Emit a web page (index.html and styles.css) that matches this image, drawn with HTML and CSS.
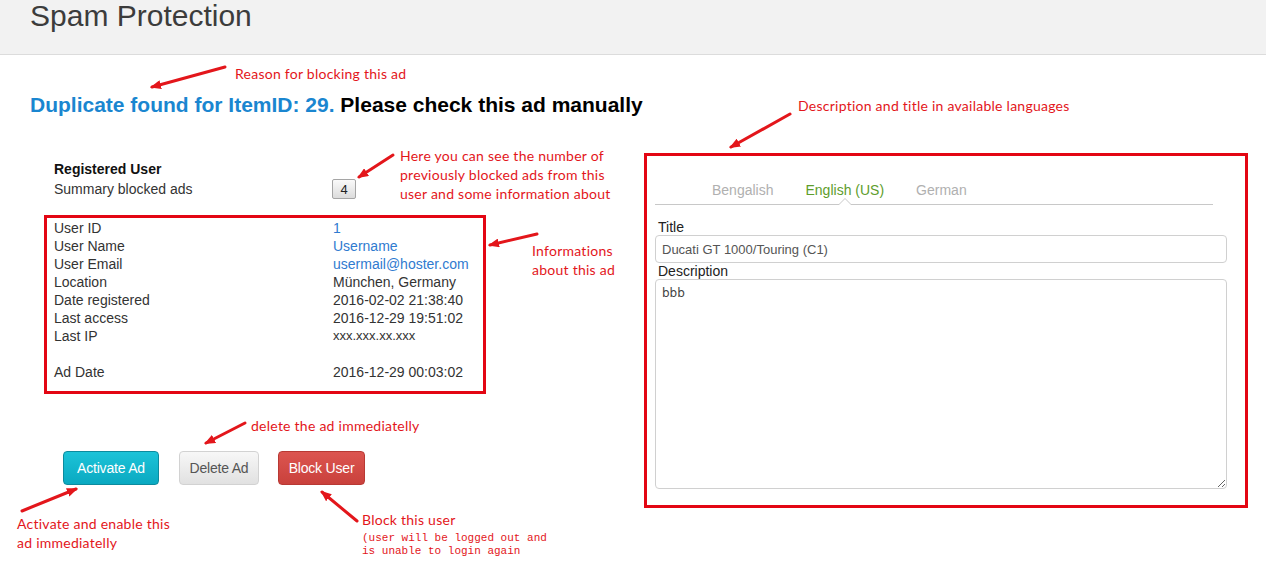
FILE: index.html
```html
<!DOCTYPE html>
<html lang="en">
<head>
<meta charset="utf-8">
<title>Spam Protection</title>
<link rel="stylesheet" href="styles.css">
</head>
<body>
<header class="page-header">
  <h1 class="page-title">Spam Protection</h1>
</header>

<main class="content">
  <h2 class="reason"><span class="reason-blue">Duplicate found for ItemID: 29.</span> Please check this ad manually</h2>

  <div class="columns">
    <section class="user-col">
      <div class="summary">
        <div class="summary-title">Registered User</div>
        <div class="summary-row">
          <span class="summary-label">Summary blocked ads</span>
          <button class="count-btn">4</button>
        </div>
      </div>

      <div class="info-box">
        <div class="info-grid">
          <span>User ID</span><a class="link">1</a>
          <span>User Name</span><a class="link">Username</a>
          <span>User Email</span><a class="link">usermail@hoster.com</a>
          <span>Location</span><span>München, Germany</span>
          <span>Date registered</span><span>2016-02-02 21:38:40</span>
          <span>Last access</span><span>2016-12-29 19:51:02</span>
          <span>Last IP</span><span class="ip">xxx.xxx.xx.xxx</span>
          <span class="blank">&nbsp;</span><span class="blank">&nbsp;</span>
          <span>Ad Date</span><span>2016-12-29 00:03:02</span>
        </div>
      </div>

      <div class="actions">
        <button class="btn btn-activate">Activate Ad</button>
        <button class="btn btn-delete">Delete Ad</button>
        <button class="btn btn-block">Block User</button>
      </div>
    </section>

    <section class="lang-panel">
      <ul class="tabs">
        <li class="tab">Bengalish</li>
        <li class="tab active">English (US)</li>
        <li class="tab">German</li>
      </ul>
      <label class="field-label">Title</label>
      <input class="field-input" type="text" value="Ducati GT 1000/Touring (C1)">
      <label class="field-label">Description</label>
      <textarea class="field-textarea">bbb</textarea>
    </section>
  </div>
</main>

<div class="note note-reason">Reason for blocking this ad</div>
<div class="note note-desc">Description and title in available languages</div>
<div class="note note-here">Here you can see the number of<br>previously blocked ads from this<br>user and some information about</div>
<div class="note note-info">Informations<br>about this ad</div>
<div class="note note-delete">delete the ad immediatelly</div>
<div class="note note-activate">Activate and enable this<br>ad immediatelly</div>
<div class="note note-block">Block this user</div>
<div class="note-mono">(user will be logged out and<br>is unable to login again</div>

<svg class="arrows" viewBox="0 0 1266 583" width="1266" height="583" aria-hidden="true">
  <defs>
    <marker id="ah" markerWidth="11" markerHeight="9" refX="9" refY="4.5" orient="auto" markerUnits="userSpaceOnUse">
      <path d="M0,0 L11,4.5 L0,9 z" fill="#e3161b"/>
    </marker>
  </defs>
  <g stroke="#e3161b" stroke-width="3" stroke-linecap="round" fill="none">
    <line x1="225" y1="67" x2="152" y2="87" marker-end="url(#ah)"/>
    <line x1="790" y1="114" x2="731" y2="147" marker-end="url(#ah)"/>
    <line x1="393" y1="155" x2="359" y2="177" marker-end="url(#ah)"/>
    <line x1="537" y1="234" x2="490" y2="245" marker-end="url(#ah)"/>
    <line x1="245" y1="423" x2="206" y2="443" marker-end="url(#ah)"/>
    <line x1="22" y1="511" x2="76" y2="489" marker-end="url(#ah)"/>
    <line x1="357" y1="521" x2="322" y2="492" marker-end="url(#ah)"/>
  </g>
</svg>
</body>
</html>
```

FILE: styles.css
```css
* { box-sizing: border-box; }

html, body {
  margin: 0;
  padding: 0;
  background: #ffffff;
}

body {
  position: relative;
  width: 1266px;
  min-height: 583px;
  overflow: hidden;
  font-family: "Liberation Sans", Arial, sans-serif;
  font-size: 14px;
  color: #333333;
}

.page-header {
  height: 55px;
  background: #f2f2f2;
  border-bottom: 1px solid #dcdcdc;
  padding-left: 30px;
}

.page-title {
  margin: 0;
  font-size: 30px;
  font-weight: normal;
  line-height: 32px;
  color: #3c3c3c;
}

.content {
  padding-left: 30px;
}

.reason {
  margin: 38px 0 0;
  font-size: 21px;
  line-height: 24px;
  font-weight: bold;
  color: #000000;
}

.reason-blue { color: #1a86d0; }

.columns {
  display: flex;
  align-items: flex-start;
  margin-top: 36px;
}

.user-col {
  width: 614px;
  padding-left: 14px;
  padding-top: 6px;
}

.summary {
  padding-left: 10px;
}

.summary-title {
  font-weight: bold;
  line-height: 20px;
  color: #111;
}

.summary-row {
  display: flex;
  align-items: center;
  height: 20px;
}

.summary-label {
  width: 278px;
  line-height: 20px;
}

.count-btn {
  width: 24px;
  height: 20px;
  padding: 0;
  margin: 0;
  font-family: "Liberation Sans", Arial, sans-serif;
  font-size: 13px;
  color: #222;
  background: linear-gradient(#fafafa, #dcdcdc);
  border: 1px solid #a5a5a5;
  border-radius: 2px;
}

.info-box {
  margin-top: 16px;
  width: 442px;
  border: 3px solid #e30613;
  padding: 1px 0 10px 7px;
}

.info-grid {
  display: grid;
  grid-template-columns: 279px auto;
  line-height: 18px;
}

.link { color: #2f7bd0; text-decoration: none; }
.ip { font-size: 13px; }

.actions {
  display: flex;
  gap: 19px;
  margin-top: 57px;
  padding-left: 19px;
}

.btn {
  height: 34px;
  padding: 0;
  font-family: "Liberation Sans", Arial, sans-serif;
  font-size: 14px;
  letter-spacing: -0.2px;
  border-radius: 4px;
  border: 1px solid;
}

.btn-activate {
  width: 96px;
  margin-right: 1px;
  color: #ffffff;
  background: linear-gradient(#1cc3d8, #0aa9c1);
  border-color: #0c8b9e;
}

.btn-delete {
  width: 80px;
  color: #555555;
  background: linear-gradient(#f7f7f7, #e1e1e1);
  border-color: #d2d2d2;
}

.btn-block {
  width: 87px;
  color: #ffffff;
  background: linear-gradient(#dc5550, #c9413c);
  border-color: #b83934;
}

.lang-panel {
  width: 604px;
  border: 3px solid #e30613;
  padding: 20px 18px 16px 8px;
  display: flex;
  flex-direction: column;
}

.tabs {
  list-style: none;
  margin: 0 14px 0 0;
  padding: 0 0 0 41px;
  display: flex;
  border-bottom: 1px solid #c8c8c8;
}

.tab {
  position: relative;
  padding: 4px 16px;
  line-height: 20px;
  color: #b0b0b0;
}

.tab.active { color: #5e9d2c; }

.tab.active::before {
  content: "";
  position: absolute;
  left: 50%;
  bottom: -1px;
  margin-left: -7px;
  border-left: 7px solid transparent;
  border-right: 7px solid transparent;
  border-bottom: 7px solid #c8c8c8;
}

.tab.active::after {
  content: "";
  position: absolute;
  left: 50%;
  bottom: -1px;
  margin-left: -6px;
  border-left: 6px solid transparent;
  border-right: 6px solid transparent;
  border-bottom: 6px solid #ffffff;
}

.field-label {
  line-height: 16px;
  padding-left: 3px;
  color: #222;
}

.tabs + .field-label { margin-top: 14px; }

.field-input {
  height: 28px;
  width: 100%;
  margin: 0;
  padding: 0 6px;
  font-family: "Liberation Sans", Arial, sans-serif;
  font-size: 13px;
  color: #555;
  border: 1px solid #d0d0d0;
  border-radius: 4px;
}

.field-textarea {
  height: 210px;
  width: 100%;
  margin: 0;
  padding: 6px;
  font-family: "DejaVu Sans", sans-serif;
  font-size: 12px;
  color: #444;
  border: 1px solid #d0d0d0;
  border-radius: 4px;
  resize: vertical;
}

.note {
  position: absolute;
  font-family: Lato, "Liberation Sans", sans-serif;
  font-size: 14px;
  letter-spacing: 0.25px;
  line-height: 19px;
  color: #e3161b;
  white-space: nowrap;
}

.note-reason { left: 235px; top: 64px; }
.note-desc { left: 798px; top: 96px; }
.note-here { left: 400px; top: 146px; }
.note-info { left: 532px; top: 241px; }
.note-delete { left: 251px; top: 416px; }
.note-activate { left: 17px; top: 514px; }
.note-block { left: 362px; top: 510px; }

.note-mono {
  position: absolute;
  left: 362px;
  top: 532px;
  font-family: "Liberation Mono", monospace;
  font-size: 11px;
  line-height: 13px;
  color: #e3161b;
  white-space: nowrap;
}

.arrows {
  position: absolute;
  left: 0;
  top: 0;
  pointer-events: none;
}
```
